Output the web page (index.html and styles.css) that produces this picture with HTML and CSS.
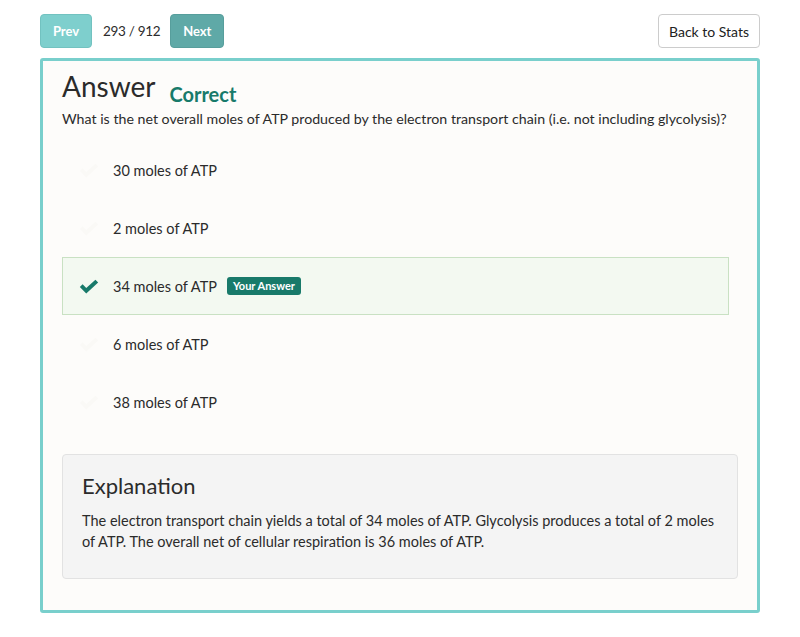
FILE: index.html
```html
<!DOCTYPE html>
<html>
<head>
<meta charset="utf-8">
<link rel="stylesheet" href="styles.css">
</head>
<body>
<div class="page">
  <div class="toolbar">
    <div class="pager">
      <button class="btn btn-prev">Prev</button>
      <span class="count">293 / 912</span>
      <button class="btn btn-next">Next</button>
    </div>
    <button class="btn-back">Back to Stats</button>
  </div>
  <div class="card">
    <div class="title-row">
      <h1 class="title">Answer</h1>
      <span class="status">Correct</span>
    </div>
    <p class="question">What is the net overall moles of ATP produced by the electron transport chain (i.e. not including glycolysis)?</p>
    <ul class="options">
      <li class="option"><span class="check faint"><svg viewBox="0 0 24 16"><path d="M2 8.5 L5 5.5 L9 9.5 L19 0.5 L22 3.5 L9 15.5 Z"/></svg></span><span class="opt-text">30 moles of ATP</span></li>
      <li class="option"><span class="check faint"><svg viewBox="0 0 24 16"><path d="M2 8.5 L5 5.5 L9 9.5 L19 0.5 L22 3.5 L9 15.5 Z"/></svg></span><span class="opt-text">2 moles of ATP</span></li>
      <li class="option selected"><span class="check"><svg viewBox="0 0 24 16"><path d="M2 8.5 L5 5.5 L9 9.5 L19 0.5 L22 3.5 L9 15.5 Z"/></svg></span><span class="opt-text">34 moles of ATP</span><span class="badge">Your Answer</span></li>
      <li class="option"><span class="check faint"><svg viewBox="0 0 24 16"><path d="M2 8.5 L5 5.5 L9 9.5 L19 0.5 L22 3.5 L9 15.5 Z"/></svg></span><span class="opt-text">6 moles of ATP</span></li>
      <li class="option"><span class="check faint"><svg viewBox="0 0 24 16"><path d="M2 8.5 L5 5.5 L9 9.5 L19 0.5 L22 3.5 L9 15.5 Z"/></svg></span><span class="opt-text">38 moles of ATP</span></li>
    </ul>
    <div class="explanation">
      <h2 class="exp-title">Explanation</h2>
      <p class="exp-text">The electron transport chain yields a total of 34 moles of ATP. Glycolysis produces a total of 2 moles of ATP. The overall net of cellular respiration is 36 moles of ATP.</p>
    </div>
  </div>
</div>
</body>
</html>
```
FILE: styles.css
```css
* { box-sizing: border-box; }
body {
  margin: 0;
  background: #ffffff;
  font-family: Lato, "Open Sans", sans-serif;
  color: #2b2b2b;
}
.page {
  width: 720px;
  margin-left: 40px;
  padding-top: 14px;
}
.toolbar {
  display: flex;
  justify-content: space-between;
  align-items: center;
  height: 34px;
}
.pager {
  display: flex;
  align-items: center;
}
.btn {
  height: 34px;
  border: 1px solid transparent;
  border-radius: 4px;
  color: #ffffff;
  font-family: inherit;
  font-weight: 700;
  font-size: 13px;
  padding: 0;
}
.btn-prev {
  width: 52px;
  background: #7ecfcd;
  border-color: #72c2c0;
}
.btn-next {
  width: 54px;
  background: #5fa9a7;
  border-color: #579e9c;
}
.count {
  font-size: 13.5px;
  color: #2b2b2b;
  margin: 0 10px 0 11px;
  letter-spacing: -0.3px;
}
.btn-back {
  height: 34px;
  width: 102px;
  background: #ffffff;
  border: 1px solid #cccccc;
  border-radius: 4px;
  font-family: inherit;
  font-size: 14px;
  color: #222;
  padding: 0;
}
.card {
  margin-top: 10px;
  border: 3px solid #79cfcc;
  border-radius: 3px;
  background: #fdfcfa;
  padding: 7px 19px 32px 19px;
  height: 555px;
}
.title-row {
  display: flex;
  align-items: baseline;
}
.title {
  margin: 0;
  font-size: 28px;
  font-weight: 400;
  line-height: 36px;
  color: #2b2b2b;
}
.status {
  margin-left: 14px;
  font-size: 20px;
  font-weight: 700;
  color: #187a6a;
  position: relative;
  top: 5px;
}
.question {
  margin: 5px 0 0 0;
  font-size: 14.2px;
  line-height: 20px;
  white-space: nowrap;
}
.options {
  list-style: none;
  margin: 12px 0 0 0;
  padding: 0;
}
.option {
  display: flex;
  align-items: center;
  height: 58px;
  margin-right: 9px;
  border: 1px solid transparent;
  font-size: 14.5px;
}
.option.selected {
  background: #f3f9f1;
  border-color: #c9e1c3;
}
.check {
  width: 22px;
  height: 15px;
  margin-left: 15px;
  margin-right: 13px;
  display: flex;
}
.check svg { width: 22px; height: 15px; fill: #187a6a; }
.check.faint svg { fill: #faf9f6; }
.badge {
  margin-left: 10px;
  background: #187a6a;
  color: #ffffff;
  font-size: 11px;
  font-weight: 700;
  padding: 2px 6px 3px;
  border-radius: 3px;
}
.explanation {
  margin-top: 23px;
  background: #f4f4f4;
  border: 1px solid #e2e2e2;
  border-radius: 4px;
  padding: 17px 19px 26px 19px;
}
.exp-title {
  margin: 0;
  font-size: 22px;
  font-weight: 400;
  line-height: 28px;
}
.exp-text {
  margin: 10px 0 0 0;
  font-size: 14.5px;
  line-height: 21px;
}
```
